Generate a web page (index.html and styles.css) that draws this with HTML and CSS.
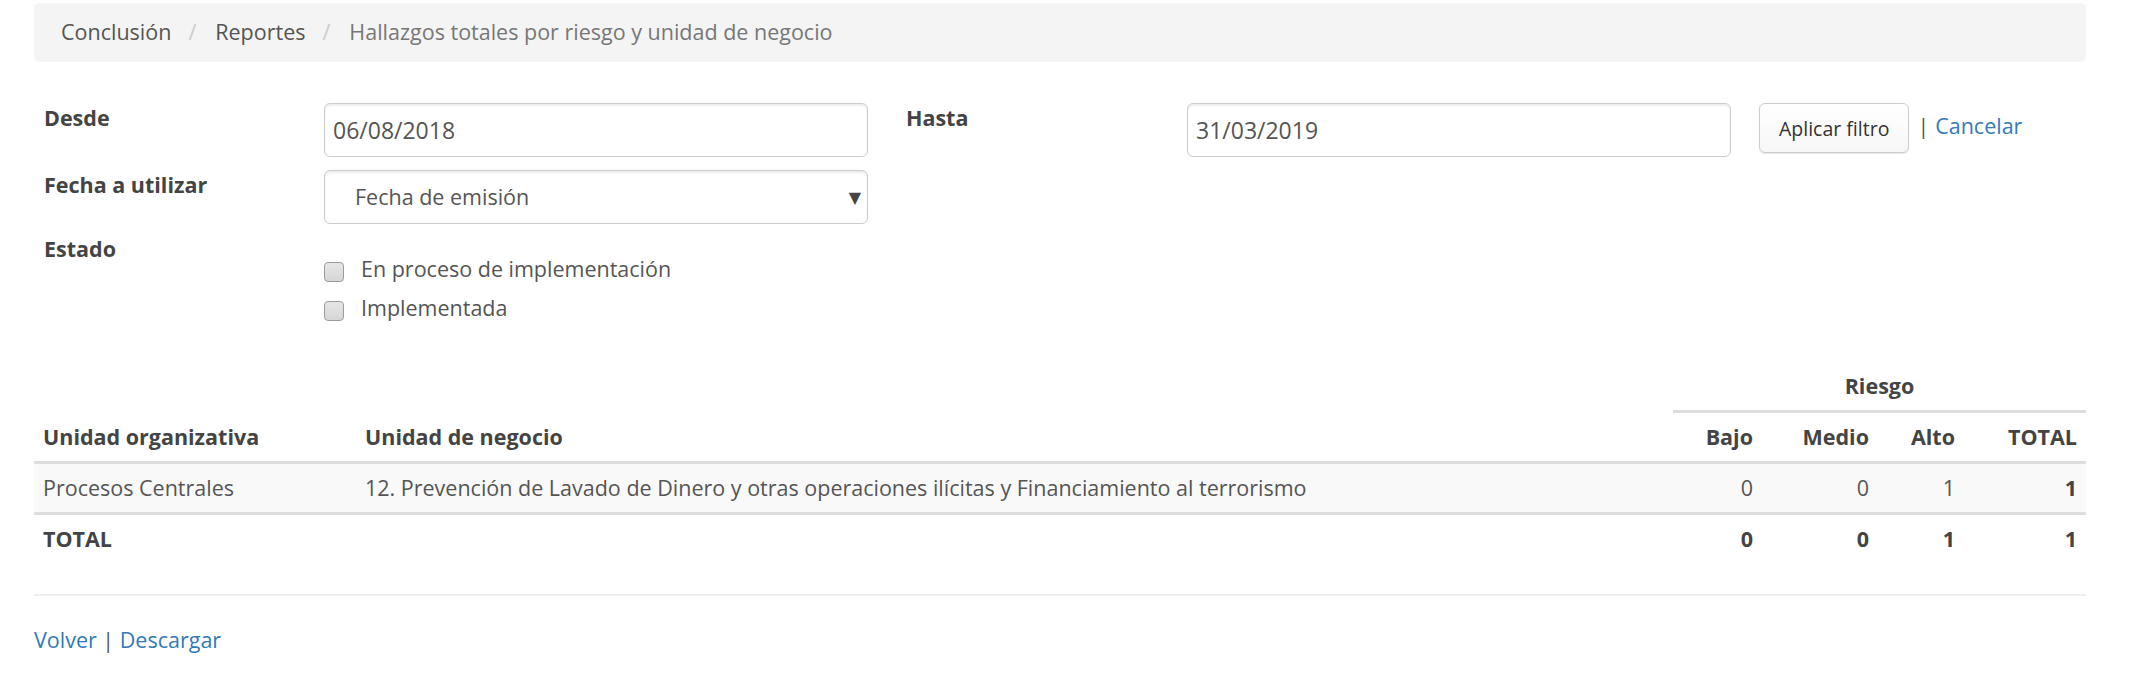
FILE: index.html
```html
<!DOCTYPE html>
<html lang="es">
<head>
<meta charset="utf-8">
<title>Hallazgos totales por riesgo y unidad de negocio</title>
<link rel="stylesheet" href="styles.css">
</head>
<body>
<div class="page">
  <ol class="breadcrumb">
    <li><a class="crumb">Conclusión</a></li>
    <li class="sep">/</li>
    <li><a class="crumb">Reportes</a></li>
    <li class="sep">/</li>
    <li class="active">Hallazgos totales por riesgo y unidad de negocio</li>
  </ol>

  <form class="filters">
    <label class="lbl">Desde</label>
    <input class="field date" type="text" value="06/08/2018">
    <label class="lbl lbl-2">Hasta</label>
    <input class="field date" type="text" value="31/03/2019">
    <div class="actions">
      <button type="button" class="btn">Aplicar filtro</button>
      <span class="bar">|</span>
      <a class="link">Cancelar</a>
    </div>

    <label class="lbl lbl-first">Fecha a utilizar</label>
    <div class="select-wrap">
      <select class="field select">
        <option>Fecha de emisión</option>
      </select>
      <span class="caret">▼</span>
    </div>

    <label class="lbl lbl-first lbl-estado">Estado</label>
    <div class="checklist">
      <label class="check"><span class="box"></span>En proceso de implementación</label>
      <label class="check"><span class="box"></span>Implementada</label>
    </div>
  </form>

  <table class="report">
    <colgroup>
      <col class="c-org">
      <col class="c-neg">
      <col class="c-bajo">
      <col class="c-medio">
      <col class="c-alto">
      <col class="c-total">
    </colgroup>
    <thead>
      <tr>
        <th rowspan="2" class="hb">Unidad organizativa</th>
        <th rowspan="2" class="hb">Unidad de negocio</th>
        <th colspan="4" class="group">Riesgo</th>
      </tr>
      <tr>
        <th class="num hb">Bajo</th>
        <th class="num hb">Medio</th>
        <th class="num hb">Alto</th>
        <th class="num hb">TOTAL</th>
      </tr>
    </thead>
    <tbody>
      <tr>
        <td>Procesos Centrales</td>
        <td>12. Prevención de Lavado de Dinero y otras operaciones ilícitas y Financiamiento al terrorismo</td>
        <td class="num val">0</td>
        <td class="num val">0</td>
        <td class="num val">1</td>
        <td class="num strong">1</td>
      </tr>
    </tbody>
    <tfoot>
      <tr>
        <td class="strong">TOTAL</td>
        <td></td>
        <td class="num strong">0</td>
        <td class="num strong">0</td>
        <td class="num strong">1</td>
        <td class="num strong">1</td>
      </tr>
    </tfoot>
  </table>

  <hr class="rule">

  <p class="footer-links"><a class="link">Volver</a> | <a class="link">Descargar</a></p>
</div>
</body>
</html>
```

FILE: styles.css
```css
body {
  margin: 0;
  font-family: "Open Sans", "DejaVu Sans", sans-serif;
  font-size: 21.5px;
  line-height: 30px;
  color: #555;
  background: #fff;
}

.page {
  padding: 3px 60px 0 34px;
}

/* Breadcrumb */
.breadcrumb {
  list-style: none;
  margin: 0;
  padding: 14px 27px 15px;
  background: #f4f4f4;
  border-radius: 6px;
  display: flex;
}

.crumb {
  color: #555;
}

.sep {
  color: #ccc;
  margin: 0 19px 0 17px;
}

.active {
  color: #777;
}

/* Filters */
.filters {
  margin-top: 41px;
  display: grid;
  grid-template-columns: 290px 544px 319px 544px 1fr;
  row-gap: 13px;
  align-items: start;
}

.lbl {
  font-weight: 700;
  color: #444;
  padding-left: 10px;
}

.lbl-first {
  grid-column: 1;
}

.lbl-2 {
  padding-left: 38px;
}

.lbl-estado {
  margin-top: -3px;
}

.field {
  box-sizing: border-box;
  width: 100%;
  height: 54px;
  margin: 0;
  border: 1px solid #ccc;
  border-radius: 6px;
  padding: 0 8px;
  font: inherit;
  color: #555;
  background: #fff;
  box-shadow: inset 0 2px 2px rgba(0, 0, 0, 0.07);
}

.date {
  font-size: 23px;
}

.select-wrap {
  position: relative;
}

.select {
  appearance: none;
  -webkit-appearance: none;
  padding-left: 30px;
}

.caret {
  position: absolute;
  right: 7px;
  top: 12px;
  font-size: 16px;
  color: #444;
  pointer-events: none;
}

.actions {
  display: flex;
  align-items: flex-start;
  padding-left: 28px;
}

.btn {
  box-sizing: border-box;
  height: 50px;
  padding: 0 19px;
  font-family: inherit;
  font-size: 19.5px;
  color: #333;
  background: linear-gradient(#fff, #f7f7f7);
  border: 1px solid #ccc;
  border-radius: 6px;
  box-shadow: 0 1px 1px rgba(0, 0, 0, 0.1);
}

.bar {
  margin-left: 8px;
  padding-top: 8px;
  color: #555;
  white-space: pre;
}

.actions .link {
  padding-top: 8px;
  margin-left: 6px;
}

.link {
  color: #337ab7;
  text-decoration: none;
}

.checklist {
  grid-column: 2 / span 2;
  padding-top: 17px;
}

.check {
  display: flex;
  align-items: flex-start;
  margin-bottom: 9px;
}

.check:last-child {
  margin-bottom: 0;
}

.box {
  box-sizing: border-box;
  width: 20px;
  height: 20px;
  margin-top: 8px;
  margin-right: 17px;
  border: 1px solid #9c9c9c;
  border-radius: 4px;
  background: linear-gradient(#e6e6e6, #d6d6d6);
}

/* Table */
.report {
  width: 100%;
  margin-top: 39px;
  border-collapse: separate;
  border-spacing: 0;
  table-layout: fixed;
}

.c-org { width: 322px; }
.c-bajo { width: 89px; }
.c-medio { width: 116px; }
.c-alto { width: 86px; }
.c-total { width: 122px; }

.report th,
.report td {
  padding: 9px;
  text-align: left;
  vertical-align: bottom;
}

.report th {
  font-weight: 700;
  color: #444;
}

.report .group {
  text-align: center;
  border-bottom: 3px solid #ddd;
}

.report .hb {
  border-bottom: 3px solid #ddd;
}

.report tbody td {
  background: #f9f9f9;
  border-bottom: 3px solid #ddd;
}

.report .num {
  text-align: right;
}

.report .val {
  color: #555;
}

.report .strong {
  font-weight: 700;
  color: #444;
}

.rule {
  margin: 31px 0 0;
  border: 0;
  border-top: 2px solid #eee;
}

.footer-links {
  margin: 29px 0 0;
}
```
